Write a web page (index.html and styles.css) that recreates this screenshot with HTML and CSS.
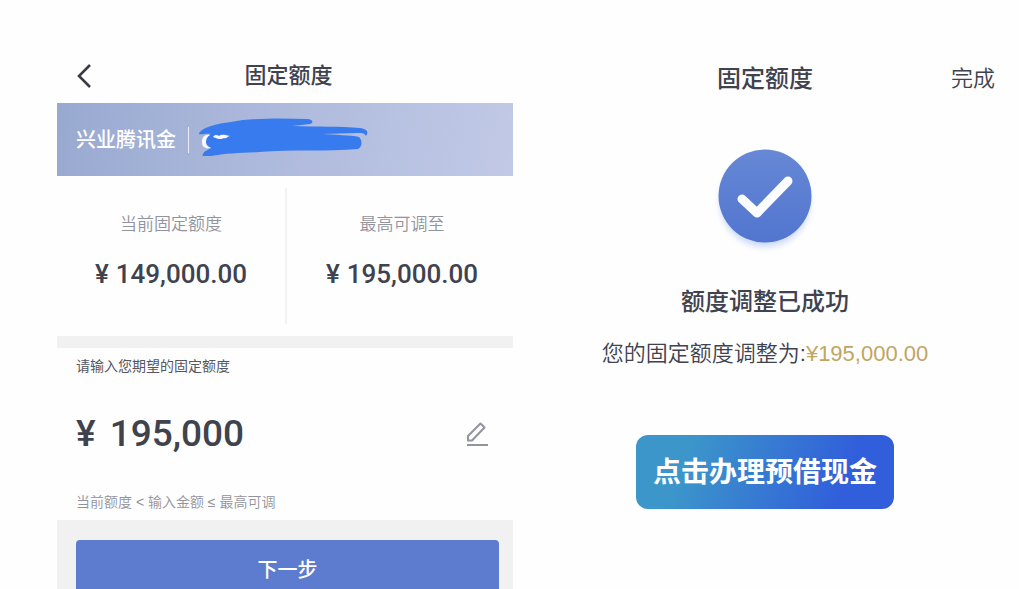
FILE: index.html
```html
<!DOCTYPE html>
<html lang="zh-CN">
<head>
<meta charset="utf-8">
<meta name="viewport" content="width=device-width, initial-scale=1">
<title>固定额度</title>
<link rel="stylesheet" href="styles.css">
</head>
<body>
<main class="screens">
  <section class="adjust">
    <header class="adjust-head">
      <button class="back" type="button" aria-label="返回">
        <svg width="16" height="26" viewBox="0 0 16 26"><path d="M14 2 3 13l11 11" fill="none" stroke="#3b3c46" stroke-width="2.6"/></svg>
      </button>
      <h1 class="title">固定额度</h1>
    </header>
    <div class="account">
      <span class="account-name">兴业腾讯金</span>
      <svg class="scribble" width="172" height="38" viewBox="0 0 172 38" aria-hidden="true">
        <path d="M0 15C6 8 18 6 32 4 52 0 82 0 108 1c6 0 7 4 3 5l-18 2c26 1 48 0 68 2 7 1 9 4 6 8-2-3-3-3-8-3l-36 1c13 1 29 1 37 3 4 4 3 10-1 12-30 3-67 0-99 3-19 1-34 1-48 4-5 1-10 1-8-2 1-3 5-4 8-6-7-3-7-12 0-14-5-1-14 2-12-1z" fill="#377bee"/>
        <path d="M11 17c-5-1-8 2-8 7s3 7 9 6c-4-2-5-3-5-6s1-5 4-7z" fill="#f7faff"/>
        <path d="M14 19c2-3 4-2 6-1 3-2 5-1 11 0-4 1-3 3-6 2-3 2-6 1-11-1z" fill="#f7faff"/>
      </svg>
    </div>
    <div class="quotas">
      <div class="quota"><span class="quota-label">当前固定额度</span><span class="amount"><span class="yen">¥</span>149,000.00</span></div>
      <div class="quota"><span class="quota-label">最高可调至</span><span class="amount"><span class="yen">¥</span>195,000.00</span></div>
    </div>
    <form class="entry">
      <label class="entry-label" for="limit">请输入您期望的固定额度</label>
      <div class="entry-row">
        <span class="entry-yen">¥</span>
        <input class="entry-input" id="limit" type="text" inputmode="numeric" value="195,000">
        <button class="edit" type="button" aria-label="编辑">
          <svg width="24" height="26" viewBox="0 0 24 26" fill="none" stroke="#92949c" stroke-width="2"><path d="M3 19.500V15L15.500 2.500l4 4L7 19.500z" stroke-linejoin="round"/><path d="M2 24h21"/></svg>
        </button>
      </div>
      <p class="hint">当前额度 &lt; 输入金额 ≤ 最高可调</p>
    </form>
    <div class="actions"><button class="next" type="button">下一步</button></div>
  </section>

  <section class="result">
    <header class="result-head">
      <h2 class="title title-large">固定额度</h2>
      <button class="done" type="button">完成</button>
    </header>
    <svg class="success" width="110" height="116" viewBox="0 0 110 116" role="img" aria-label="成功">
      <defs>
        <linearGradient id="disc" x1="0" y1="0" x2="0" y2="1"><stop offset="0" stop-color="#6688d5"/><stop offset="1" stop-color="#5275cf"/></linearGradient>
        <filter id="glow" x="-20%" y="-20%" width="140%" height="140%"><feGaussianBlur stdDeviation="3"/></filter>
      </defs>
      <circle cx="55" cy="58" r="45" fill="#cbd8f6" filter="url(#glow)"/>
      <circle cx="55" cy="52" r="46.500" fill="url(#disc)"/>
      <path d="M32 55l15 14 31-32" fill="none" stroke="#fbfdff" stroke-width="9" stroke-linecap="round" stroke-linejoin="round"/>
    </svg>
    <h3 class="result-title">额度调整已成功</h3>
    <p class="result-text">您的固定额度调整为:<span class="gold">¥195,000.00</span></p>
    <button class="cash" type="button">点击办理预借现金</button>
  </section>
</main>
</body>
</html>
```
FILE: styles.css
```css
* { box-sizing: border-box; }
body {
  margin: 0;
  background: #fefefe;
  color: #40424e;
  font-family: "Liberation Sans", "Noto Sans CJK SC", sans-serif;
}
h1, h2, h3, p { margin: 0; }
button, input { border: 0; padding: 0; background: none; color: inherit; font-family: inherit; }
button { cursor: pointer; }
svg { display: block; }

.screens {
  display: flex;
  width: 100%;
  height: 100vh;
  padding-left: 57px;
  overflow: hidden;
}

.adjust { display: flex; flex: 19 1 0; flex-direction: column; min-width: 0; }
.adjust-head {
  display: grid;
  grid-template-columns: 20px 1fr 16px;
  align-items: center;
  padding: 60px 16px 11px 19px;
}
.title { font-size: 22px; line-height: 32px; font-weight: 500; text-align: center; }
.title-large { font-size: 24px; }

.account {
  display: flex;
  flex-shrink: 0;
  align-items: center;
  min-height: 73px;
  padding-left: 19px;
  background: linear-gradient(100deg, #98a9d0, #adb9dc 45%, #c1c9e6);
}
.account-name {
  padding-right: 12px;
  border-right: 1px solid #e8edf8;
  color: #fff;
  font-size: 20px;
  line-height: 26px;
  font-weight: 500;
}
.scribble { margin: 0 0 6px 10px; }

.quotas { display: grid; grid-template-columns: 1fr 1fr; padding: 12px 0; }
.quota { display: flex; flex-direction: column; align-items: center; gap: 20px; padding: 25px 0 32px; }
.quota + .quota { padding-left: 4px; border-left: 2px solid #f2f2f4; }
.quota-label { color: #92939c; font-size: 17px; line-height: 24px; font-weight: 350; }
.amount { font: 500 26px/35px Roboto, "Noto Sans CJK SC", sans-serif; }
.yen { margin-right: 7px; }

.entry { padding: 6px 24px 6px 19px; border-top: 12px solid #f1f1f1; }
.entry-label { display: block; color: #55565f; font-size: 14px; line-height: 24px; }
.entry-row { display: flex; align-items: center; gap: 14px; padding: 28px 0; }
.entry-yen, .entry-input { font: 500 37px/56px Roboto, "Noto Sans CJK SC", sans-serif; }
.entry-input { flex: 1; min-width: 0; height: 56px; }
.hint { color: #92939c; font-size: 14px; line-height: 24px; font-weight: 350; }

.actions { flex: 1 0 auto; padding: 20px 14px 20px 19px; background: #f1f1f1; }
.next { width: 100%; height: 56px; border-radius: 4px; background: #5d7bcf; color: #fff; font-size: 20px; font-weight: 500; }

.result { display: flex; flex: 21 1 0; flex-direction: column; align-items: center; min-width: 0; padding-right: 2px; }
.result-head {
  display: grid;
  grid-template-columns: 1fr auto 1fr;
  align-items: center;
  width: 100%;
  padding: 63px 22px 49px;
}
.result-head .title { grid-column: 2; }
.done { justify-self: end; font-size: 22px; line-height: 32px; font-weight: 350; }
.result-title { margin-top: 24px; font-size: 24px; line-height: 36px; font-weight: 500; }
.result-text { margin-top: 18px; font-size: 22px; line-height: 32px; font-weight: 350; }
.gold { color: #c1a561; }
.cash {
  margin-top: 65px;
  padding: 17px 17px 15px;
  border-radius: 12px;
  background: linear-gradient(110deg, #3c96ca 20%, #315edb 80%);
  color: #fff;
  font-size: 28px;
  line-height: 42px;
  font-weight: 700;
}
```
